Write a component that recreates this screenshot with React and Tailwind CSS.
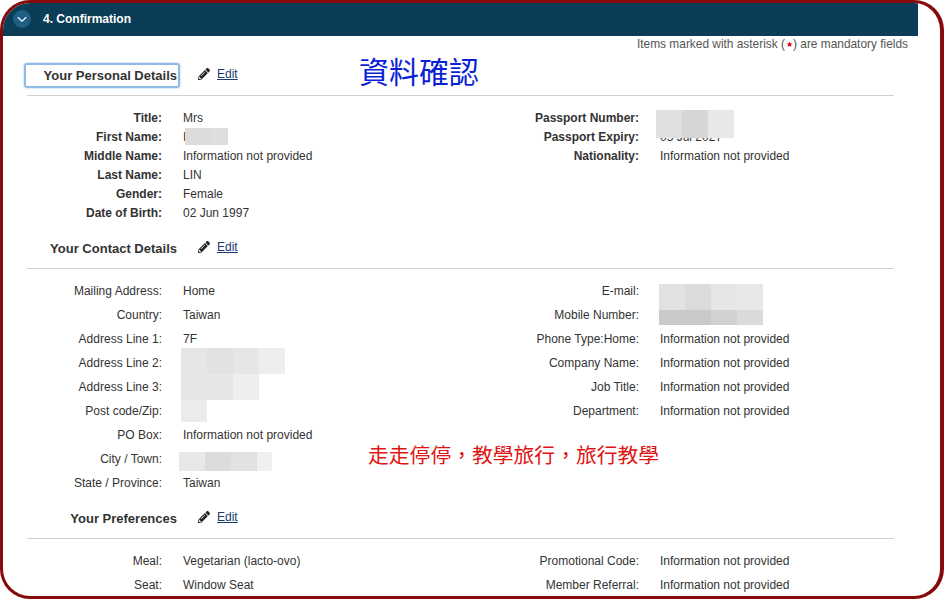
import React from "react";
import { FaPencilAlt } from "react-icons/fa";

const NOT_GIVEN = "Information not provided";

function Redact({ cells, height, className }) {
  return (
    <div className={`absolute flex ${className}`}>
      {cells.map((c, i) => (
        <div key={i} className="w-[26px]" style={{ height, background: c }} />
      ))}
    </div>
  );
}

function Field({ label, value, bold, children }) {
  return (
    <div className="flex items-center h-full">
      <div className={`w-[159px] text-right ${bold ? "font-bold" : ""}`}>{label}</div>
      <div className="relative ml-[21px] whitespace-nowrap">
        {value}
        {children}
      </div>
    </div>
  );
}

function Heading({ title, className }) {
  return (
    <div className={`flex items-center h-[24px] ${className}`}>
      <div className="w-[174px] mt-[2px] text-right text-[13px] font-bold text-[#333]">{title}</div>
      <FaPencilAlt className="ml-[21px] mb-[2px] text-[12px] text-[#222]" />
      <a className="ml-[7px] mb-[2px] text-[12px] text-[#1a3a6e] underline">Edit</a>
    </div>
  );
}

function Rule({ className }) {
  return <div className={`ml-[24px] w-[867px] h-px bg-[#d0d0d0] ${className}`} />;
}

export default function App() {
  return (
    <div
      className="w-[944px] h-[599px] overflow-hidden border-[3px] border-r-4 border-[#870a0d] rounded-[30px] bg-white text-[12px] text-[#333]"
      style={{ fontFamily: '"Liberation Sans", Arial, sans-serif' }}
    >
      <div className="flex items-center w-[915px] h-[33px] bg-[#0b3d56] text-white">
        <svg width="18" height="18" viewBox="0 0 18 18" className="ml-[10px] mb-[1px]">
          <circle cx="9" cy="9" r="9" fill="#1f5f85" />
          <path d="M4.8 7.2 9 11.2l4.2-4" fill="none" stroke="#fff" strokeWidth="1.2" />
        </svg>
        <span className="ml-[12px] mb-[2px] font-bold">4. Confirmation</span>
      </div>

      <div className="relative">
        <div className="h-[18px] w-[905px] flex items-center justify-end text-[11.9px] text-[#555]">
          Items marked with asterisk (<span className="inline-block w-[8px] text-center text-[8px] text-[#c00]">★</span>) are mandatory fields
        </div>

        {/* section: personal */}
        <Heading title="Your Personal Details" className="mt-[9px]" />
        <div className="absolute left-[21px] top-[27px] w-[156px] h-[25px] rounded-[3px] border-2 border-[#8fbbe6] shadow-[0_0_2px_#8fbbe6]" />
        <Rule className="mt-[8px]" />
        <div className="grid grid-cols-[477px_1fr] auto-rows-[19px] mt-[12px]">
          <Field bold label="Title:" value="Mrs" />
          <Field bold label="Passport Number:">
            <Redact
              cells={["#e0e0e0", "#d6d6d6", "#e8e8e8"]}
              height={28}
              className="-left-[4px] -top-[7.5px]"
            />
          </Field>
          <Field bold label="First Name:" value="I">
            <div className="absolute left-[2px] top-[0.5px] flex h-[17px]">
              <div className="w-[26px] bg-[#dcdcdc]" />
              <div className="w-[17px] bg-[#dedede]" />
            </div>
          </Field>
          <Field bold label="Passport Expiry:" value="05 Jul 2027">
            <Redact
              cells={["#e0e0e0", "#d6d6d6", "#e8e8e8"]}
              height={11}
              className="-left-[4px] -top-[0.5px]"
            />
          </Field>
          <Field bold label="Middle Name:" value={NOT_GIVEN} />
          <Field bold label="Nationality:" value={NOT_GIVEN} />
          <Field bold label="Last Name:" value="LIN" />
          <div />
          <Field bold label="Gender:" value="Female" />
          <div />
          <Field bold label="Date of Birth:" value="02 Jun 1997" />
          <div />
        </div>

        {/* section: contact */}
        <Heading title="Your Contact Details" className="mt-[14px]" />
        <Rule className="mt-[8px]" />
        <div className="grid grid-cols-[477px_1fr] auto-rows-[24px] mt-[10px]">
          <Field label="Mailing Address:" value="Home" />
          <Field label="E-mail:">
            <Redact
              cells={["#e2e2e2", "#dadcdc", "#e6e6e6", "#e8e8e8"]}
              height={26}
              className="-left-[1px] -top-[7px]"
            />
          </Field>
          <Field label="Country:" value="Taiwan" />
          <Field label="Mobile Number:">
            <Redact
              cells={["#c9c9c9", "#c9c9c9", "#d2d2d2", "#dadada"]}
              height={15}
              className="-left-[1px] -top-[5px]"
            />
          </Field>
          <Field label="Address Line 1:" value="7F" />
          <Field label="Phone Type:Home:" value={NOT_GIVEN} />
          <Field label="Address Line 2:">
            <Redact
              cells={["#e6e6e6", "#e2e2e2", "#e6e6e6", "#eeeeee"]}
              height={26}
              className="-left-[2px] -top-[15px]"
            />
          </Field>
          <Field label="Company Name:" value={NOT_GIVEN} />
          <Field label="Address Line 3:">
            <Redact
              cells={["#e6e6e6", "#e6e6e6", "#eeeeee"]}
              height={26}
              className="-left-[2px] -top-[13px]"
            />
          </Field>
          <Field label="Job Title:" value={NOT_GIVEN} />
          <Field label="Post code/Zip:">
            <Redact cells={["#ebebeb"]} height={22} className="-left-[2px] -top-[11px]" />
          </Field>
          <Field label="Department:" value={NOT_GIVEN} />
          <Field label="PO Box:" value={NOT_GIVEN} />
          <div />
          <Field label="City / Town:">
            <Redact
              cells={["#e8e8e8", "#dcdcdc", "#e2e2e2"]}
              height={19}
              className="-left-[4px] -top-[7px]"
            />
            <div className="absolute left-[74px] -top-[7px] w-[15px] h-[19px] bg-[#f0f0f0]" />
          </Field>
          <div />
          <Field label="State / Province:" value="Taiwan" />
          <div />
        </div>

        {/* section: preferences */}
        <Heading title="Your Preferences" className="mt-[11px]" />
        <Rule className="mt-[8px]" />
        <div className="grid grid-cols-[477px_1fr] auto-rows-[24px] mt-[10px]">
          <Field label="Meal:" value="Vegetarian (lacto-ovo)" />
          <Field label="Promotional Code:" value={NOT_GIVEN} />
          <Field label="Seat:" value="Window Seat" />
          <Field label="Member Referral:" value={NOT_GIVEN} />
        </div>

        {/* notes written over the screenshot */}
        <div
          className="absolute left-[356px] top-[16px] text-[30px] leading-[36px] text-[#0b1fd6]"
          style={{ fontFamily: '"Noto Sans CJK TC", sans-serif' }}
        >
          資料確認
        </div>
        <div
          className="absolute left-[365px] top-[403px] text-[20.8px] leading-[30px] text-[#e01414] whitespace-nowrap"
          style={{ fontFamily: '"Noto Sans CJK TC", sans-serif' }}
        >
          走走停停，教學旅行，旅行教學
        </div>
      </div>
    </div>
  );
}
